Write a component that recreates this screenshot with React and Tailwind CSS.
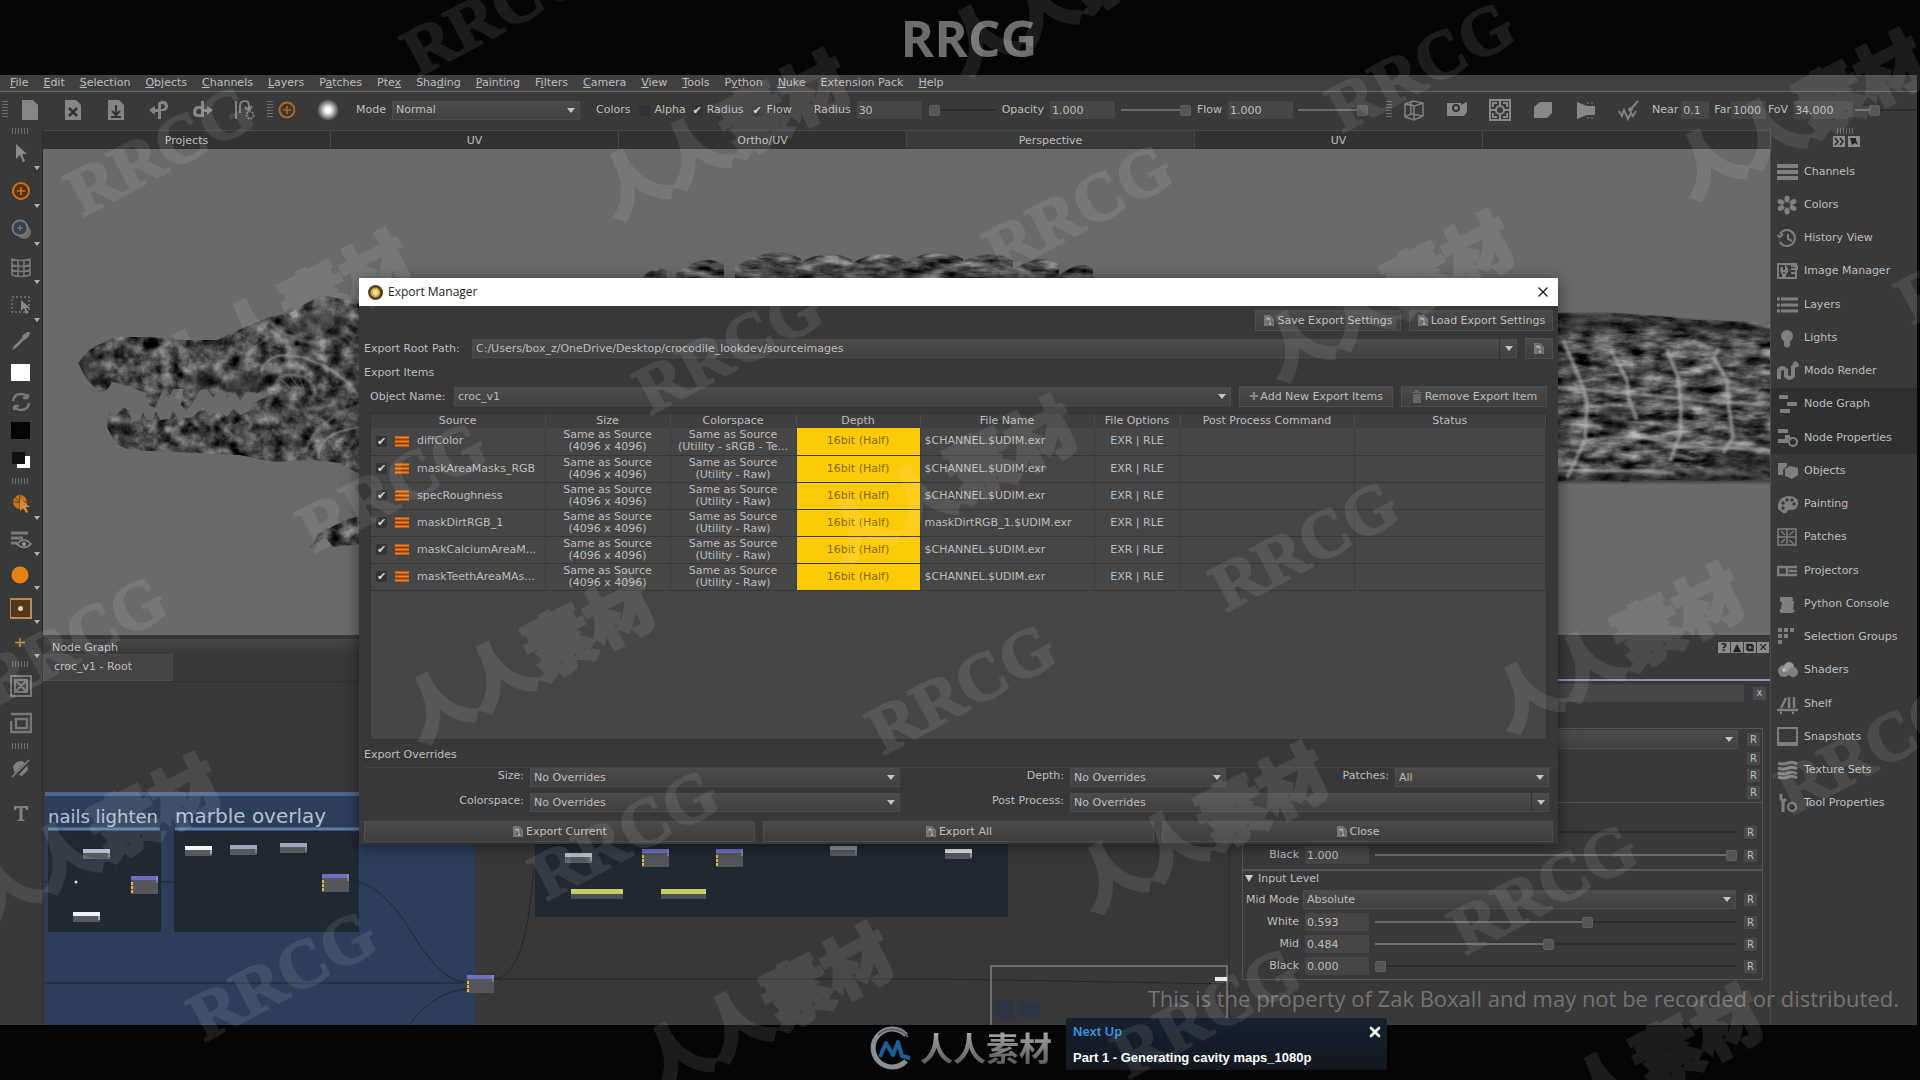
import { useState } from 'react';
import { X } from 'lucide-react';

const menus = [
    ['', 'F', 'ile'], ['', 'E', 'dit'], ['', 'S', 'election'], ['', 'O', 'bjects'], ['', 'C', 'hannels'],
    ['', 'L', 'ayers'], ['P', 'a', 'tches'], ['Pte', 'x', ''], ['Sha', 'd', 'ing'], ['', 'P', 'ainting'],
    ['F', 'i', 'lters'], ['', 'C', 'amera'], ['', 'V', 'iew'], ['', 'T', 'ools'], ['P', 'y', 'thon'],
    ['', 'N', 'uke'], ['Extension Pack', '', ''], ['', 'H', 'elp'],
];

const exportRows = [
    { name: 'diffColor', space: '(Utility - sRGB - Te...', file: '$CHANNEL.$UDIM.exr' },
    { name: 'maskAreaMasks_RGB', space: '(Utility - Raw)', file: '$CHANNEL.$UDIM.exr' },
    { name: 'specRoughness', space: '(Utility - Raw)', file: '$CHANNEL.$UDIM.exr' },
    { name: 'maskDirtRGB_1', space: '(Utility - Raw)', file: 'maskDirtRGB_1.$UDIM.exr' },
    { name: 'maskCalciumAreaM...', space: '(Utility - Raw)', file: '$CHANNEL.$UDIM.exr' },
    { name: 'maskTeethAreaMAs...', space: '(Utility - Raw)', file: '$CHANNEL.$UDIM.exr' },
];

const latinMarks = [
    [496, 10], [1420, 66], [160, 150], [1078, 208], [728, 348], [392, 486], [1990, 258], [1304, 545],
    [72, 640], [961, 688], [624, 834], [282, 975], [1870, 748], [1543, 888], [1206, 1012],
];
const hanMarks = [
    [1070, -12], [722, 132], [284, 312], [1798, 112], [1386, 293], [949, 478], [527, 655], [93, 836],
    [1616, 645], [1200, 825], [765, 1005], [1635, 1066],
];

/* ---------- small shared pieces ---------- */

function Grip({ vertical }) {
    return (
        <svg width={vertical ? 6 : 18} height={vertical ? 18 : 6} fill="none" stroke="#6e6e6e" strokeWidth="6" strokeDasharray="1 2">
            <path d={vertical ? 'M3 0V18' : 'M0 3H18'} />
        </svg>
    );
}

function Combo({ id, value, className = '', split }) {
    return (
        <div className={`relative h-[19px] min-w-0 ${className}`}>
            <select
                id={id}
                aria-label={value}
                className="block h-full w-full appearance-none truncate border border-[#4c4c4c] bg-linear-to-b from-[#4b4b4b] to-[#404040] pr-5 pl-[3px] text-[11px] leading-4 outline-none"
            >
                <option>{value}</option>
            </select>
            <span className={`pointer-events-none absolute inset-y-0 right-0 flex w-[18px] items-center justify-center ${split ? 'border-l border-[#333]' : ''}`}>
                <svg width="8" height="5"><path d="M0 0H8L4 5Z" fill="#c4c4c4" /></svg>
            </span>
        </div>
    );
}

function Slider({ value, label, className = '' }) {
    const fill = { background: `linear-gradient(to right, #6a6a6a ${value}%, #2b2b2b ${value}%) center / 100% 2px no-repeat` };
    return (
        <input
            type="range"
            aria-label={label}
            defaultValue={value}
            style={fill}
            className={`h-3 min-w-0 appearance-none [&::-webkit-slider-thumb]:size-[11px] [&::-webkit-slider-thumb]:appearance-none [&::-webkit-slider-thumb]:rounded-[2px] [&::-webkit-slider-thumb]:border [&::-webkit-slider-thumb]:border-[#606060] [&::-webkit-slider-thumb]:bg-[#555] ${className}`}
        />
    );
}

function Tick({ id, on, label }) {
    const [checked, setChecked] = useState(on);
    return (
        <input
            id={id}
            type="checkbox"
            aria-label={label}
            checked={checked}
            onChange={() => setChecked(!checked)}
            className="grid size-[11px] shrink-0 appearance-none place-items-center rounded-[2px] bg-[#333] text-[11px] leading-[11px] text-[#d6d6d6] checked:after:content-['✔']"
        />
    );
}

function Num({ id, value, label, className = '' }) {
    return <input id={id} aria-label={label} defaultValue={value} className={`h-[18px] bg-[#464646] pl-[2px] text-[11px] outline-none ${className}`} />;
}

function PageIcon({ className = '' }) {
    return (
        <svg width="12" height="13" viewBox="0 0 12 13" className={className}>
            <path d="M1 1h6l4 4v7H1z" fill="#777" />
            <path d="M2 5c1-3 5-3 6 0v4h2l-3 3-3-3h2V6" fill="#aaa" stroke="#444" strokeWidth=".6" />
        </svg>
    );
}

function PushButton({ children, className = '' }) {
    return (
        <button className={`flex h-[21px] items-center justify-center gap-[2px] border border-[#4e4e4e] bg-linear-to-b from-[#4a4a4a] to-[#3d3d3d] text-[11px] leading-4 whitespace-nowrap ${className}`}>
            {children}
        </button>
    );
}

/* ---------- top bars ---------- */

function MenuBar() {
    return (
        <nav className="flex h-[17px] items-center gap-[15px] border-b border-[#686868] bg-[#404040] px-[10px] leading-4">
            {menus.map(([a, b, c]) => (
                <button key={a + b + c} className="whitespace-nowrap">{a}<u className="underline-offset-1">{b}</u>{c}</button>
            ))}
        </nav>
    );
}

const fileIcons = [
    ['New', <path key="p" d="M3 1h11l5 5v15H3z" />],
    ['Close', <g key="p"><path d="M3 1h11l5 5v15H3z" /><path d="M7 9l8 8M15 9l-8 8" stroke="#333" strokeWidth="2.5" /></g>],
    ['Save', <g key="p"><path d="M3 1h11l5 5v15H3z" /><path d="M11 6v9M7 12l4 4 4-4M6 18h10" stroke="#333" strokeWidth="2" fill="none" /></g>],
    ['Undo', <path key="p" d="M1 11l6-4v3h3V6q0-4 5-4t5 5-5 5h-2v8h-3v-7H7v3zM13 5v5h2q2-1 2-3t-4-2z" fillRule="evenodd" />],
    ['Redo', <path key="p" d="M22 11l-6-4v3h-3V2h-3v5H6q-4 1-4 6t4 5h7v-5h3v3zM10 10v5H7q-2-1-2-2t2-3z" fillRule="evenodd" />],
    ['History', <g key="p" fill="none" stroke="#808080" strokeWidth="2"><path d="M2 20V2M6 14V7q0-5 5-5 4 0 4 5v3M11 8l4 4 3-5" /><circle cx="16" cy="16" r="3.500" strokeDasharray="2 1" /></g>],
];

const viewIcons = [
    ['Wireframe', <g key="v" fill="none" stroke="#808080" strokeWidth="1.5"><path d="M2 5l8-3 10 2v13l-9 4-9-3zM2 5l10 2 8-3M11 7v14M8 3v12l-6 3M8 15l12 2" /></g>],
    ['Camera', <g key="v"><path d="M1 4h14v2l6-3v10l-3 4H1z" /><circle cx="10" cy="9" r="4" fill="#333" /><circle cx="10" cy="9" r="2" /></g>],
    ['Focus', <g key="v" fill="none" stroke="#888" strokeWidth="2"><path d="M1 1h20v20H1z" /><circle cx="11" cy="11" r="4" /><path d="M4 8V4h4M14 4h4v4M18 14v4h-4M8 18H4v-4M11 2v5M11 15v5M2 11h5M15 11h5" /></g>],
    ['Shaded', <path key="v" d="M2 8l6-5h12v11l-5 5H2z" />],
    ['Projector', <g key="v"><path d="M2 3l10 4h8v9h-8L2 20z" /><path d="M12 4h8M12 19h8" stroke="#888" strokeDasharray="2 2" /></g>],
    ['Paint', <g key="v" fill="none" stroke="#808080" strokeWidth="2"><path d="M1 12l3 5 2-6 4 9 3-6 2 3 3-5" /><path d="M14 9l6-7" /><path d="M11 12l3-3" strokeWidth="4" /></g>],
];

function Target() {
    return (
        <svg width="18" height="18" stroke="#b8651c" fill="none">
            <circle cx="9" cy="9" r="7.5" strokeWidth="2" />
            <path d="M9 5v8M5 9h8" strokeWidth="1.6" />
        </svg>
    );
}

function ToolBar() {
    return (
        <div className="flex h-9 items-center pl-[2px] leading-4">
            <Grip vertical />
            <div className="ml-[11px] flex gap-[21px]">
                {fileIcons.map(([name, art]) => (
                    <button key={name} aria-label={name}><svg width="22" height="22" fill="#858585">{art}</svg></button>
                ))}
            </div>
            <span className="ml-[11px]"><Grip vertical /></span>
            <button aria-label="Paint tool" className="ml-[5px]"><Target /></button>
            <span className="ml-[20px] size-6 rounded-full bg-radial from-white from-15% to-transparent to-65%" />
            <label htmlFor="mode" className="ml-[16px]">Mode</label>
            <Combo id="mode" value="Normal" className="ml-[6px] w-[188px]" />
            <span className="ml-[16px]">Colors</span>
            <span className="ml-[9px] flex items-center gap-[4px]"><Tick id="alpha" on={false} /><label htmlFor="alpha">Alpha</label></span>
            <span className="ml-[6px] flex items-center gap-[4px]"><Tick id="rad" on /><label htmlFor="rad">Radius</label></span>
            <span className="ml-[8px] flex items-center gap-[4px]"><Tick id="flo" on /><label htmlFor="flo">Flow</label></span>
            <label htmlFor="radius" className="ml-[22px]">Radius</label>
            <Num id="radius" value="30" className="ml-[6px] w-[65px]" />
            <Slider value={0} label="Radius amount" className="ml-[7px] w-[66px]" />
            <label htmlFor="opacity" className="ml-[7px]">Opacity</label>
            <Num id="opacity" value="1.000" className="ml-[6px] w-[65px]" />
            <Slider value={100} label="Opacity amount" className="ml-[6px] w-[70px]" />
            <label htmlFor="flow" className="ml-[6px]">Flow</label>
            <Num id="flow" value="1.000" className="ml-[6px] w-[65px]" />
            <Slider value={100} label="Flow amount" className="ml-[5px] w-[70px]" />
            <span className="ml-[18px]"><Grip vertical /></span>
            <div className="ml-[11px] flex gap-[21px]">
                {viewIcons.map(([name, art]) => (
                    <button key={name} aria-label={name}><svg width="22" height="22" fill="#888">{art}</svg></button>
                ))}
            </div>
            <label htmlFor="near" className="ml-[12px]">Near</label>
            <Num id="near" value="0.1" className="ml-[3px] w-[28px]" />
            <label htmlFor="far" className="ml-[5px]">Far</label>
            <Num id="far" value="1000" className="w-[35px]" />
            <label htmlFor="fov" className="ml-[2px]">FoV</label>
            <Num id="fov" value="34.000" className="ml-[5px] w-[60px]" />
            <Slider value={28} label="Field of view" className="ml-[2px] flex-1" />
        </div>
    );
}

/* ---------- left tool column ---------- */

const S = { fill: 'none', stroke: '#787878', strokeWidth: 2 };
const tools = [
    ['h-[6px]', null],
    ['h-[38px]', 'Select', <path key="t" d="M6 2v15l4-4 3 7 2-1-3-7h5z" fill="#8a8a8a" />, true],
    ['h-[38px]', 'Paint', <g key="t" fill="#59310f" stroke="#c87422"><circle cx="11" cy="11" r="8" strokeWidth="2" /><path d="M11 7v8M7 11h8" strokeWidth="1.6" /></g>, true],
    ['h-[38px]', 'Clone', <g key="t"><circle cx="14" cy="14" r="7" fill="#6b6b6b" /><circle cx="10" cy="10" r="7.5" fill="#3a3f47" stroke="#747c84" strokeWidth="1.8" /><path d="M10 7v6M7 10h6" stroke="#808890" /></g>, true],
    ['h-[38px]', 'Warp', <path key="t" d="M2 3q9 3 18 0v16q-9 3-18 0zM2 9q9 3 18 0M2 14q9 3 18 0M8 4v16M14 4v16" {...S} strokeWidth="1.6" />, true],
    ['h-[38px]', 'Marquee', <g key="t"><path d="M2 3h17v15H2z" {...S} strokeDasharray="2 2" strokeWidth="1.4" /><path d="M11 6v11l3-3 2 6 2-1-2-5h4z" fill="#8a8a8a" /></g>, true],
    ['h-[34px]', 'Pick color', <path key="t" d="M2 20l2-4L13 7l2 2-9 9zM12 6l5-4 3 0-1 4-4 4z" fill="#808080" />],
    ['h-[29px]', 'Foreground', <path key="t" d="M1 2h19v17H1z" fill="#fff" />],
    ['h-[29px]', 'Swap', <path key="t" d="M3 10q1-7 8-7 5 0 7 4V3M18 7h-5M19 12q-1 7-8 7-5 0-7-4v4M4 15h5" {...S} strokeWidth="2.4" />],
    ['h-[30px]', 'Background', <path key="t" d="M1 2h19v17H1z" fill="#050505" />],
    ['h-[30px]', 'Reset colors', <g key="t"><path d="M7 6h13v12H7z" fill="#fff" /><path d="M2 2h13v12H2z" fill="#111" /></g>],
    ['h-[10px]', null],
    ['h-[36px]', 'Mask', <g key="t"><circle cx="10" cy="9" r="7" fill="#c9741c" /><path d="M0 9h22M10 0v18M5 4l10 11" stroke="#6b3b0c" /><path d="M10 6v12l3-3 3 5 2-1-2-5h4z" fill="#d08a44" /></g>, true],
    ['h-[36px]', 'Layer view', <g key="t"><path d="M1 4h17M1 9h12M1 14h6" {...S} strokeWidth="3" /><path d="M7 15q7-8 14 0-7 7-14 0z" fill="#3a3a3a" stroke="#8a8a8a" strokeWidth="1.5" /><circle cx="14" cy="15" r="2.2" fill="#8a8a8a" /></g>, true],
    ['h-[34px]', 'Brush tip', <circle key="t" cx="10" cy="11" r="8.5" fill="#e8820e" />, true],
    ['h-[34px]', 'Buffer', <g key="t"><path d="M0 1h21v19H0z" fill="#54371c" stroke="#b98b5c" strokeWidth="2" /><circle cx="10.500" cy="10.500" r="2.500" fill="#eacfae" /></g>, true],
    ['h-[34px]', 'Add', <path key="t" d="M10 6v9M5 10.500h10" stroke="#c08a3c" strokeWidth="1.5" />, true],
    ['h-[8px]', null],
    ['h-[36px]', 'Fit', <path key="t" d="M1 1h20v20H1zM5 5h12v12H5zM5 5l12 12M17 5L5 17" {...S} />],
    ['h-[38px]', 'Frame', <path key="t" d="M1 2h20v18H1V9M6 7h11v9H6z" {...S} strokeWidth="2.5" />],
    ['h-[8px]', null],
    ['h-[38px]', 'No light', <g key="t"><path d="M3 9q2-6 9-6l5 3 1 6-6 6-7-2z" fill="#808080" /><path d="M3 20L19 3" stroke="#3a3a3a" strokeWidth="4" /><path d="M2 19L19 2" stroke="#808080" strokeWidth="1.6" /></g>],
    ['h-[50px]', 'Text', <path key="t" d="M4 4h14v4h-1.500L15 6h-2.500v11l2 1v1h-7v-1l2-1V6H7L5.500 8H4z" fill="#808080" />],
];

function ToolColumn() {
    return (
        <div className="flex w-[43px] shrink-0 flex-col border-r border-[#2c2c2c]">
            {tools.map(([h, name, art, more], i) => name ? (
                <button key={name} aria-label={name} className={`relative flex shrink-0 items-center justify-center ${h}`}>
                    <svg width="22" height="22">{art}</svg>
                    {more && <svg width="6" height="4" className="absolute right-0.5 bottom-0.5"><path d="M0 0h6L3 4z" fill="#b0b0b0" /></svg>}
                </button>
            ) : (
                <span key={i} className={`flex shrink-0 items-center justify-center ${h}`}><Grip /></span>
            ))}
        </div>
    );
}

/* ---------- palette list on the right ---------- */

const palettes = [
    ['Channels', <path key="i" d="M0 4h21M0 10h21M0 16h21" strokeWidth="4" />],
    ['Colors', <g key="i" stroke="none"><ellipse cx="10" cy="4" rx="2.600" ry="3.500" /><ellipse cx="10" cy="16" rx="2.600" ry="3.500" /><ellipse cx="4" cy="7" rx="3.600" ry="2.600" transform="rotate(25 4 7)" /><ellipse cx="16" cy="7" rx="3.600" ry="2.600" transform="rotate(-25 16 7)" /><ellipse cx="4" cy="13" rx="3.600" ry="2.600" transform="rotate(-25 4 13)" /><ellipse cx="16" cy="13" rx="3.600" ry="2.600" transform="rotate(25 16 13)" /></g>],
    ['History View', <path key="i" d="M3 6a8 8 0 1 1 0 8M0 7l3 2 3-3M11 6v5l4 2" strokeWidth="2" fill="none" />],
    ['Image Manager', <g key="i" fill="none" strokeWidth="2"><path d="M1 3h18v14H1z" /><path d="M6 17v-4q-3-3-1-7v4h4V6q3 4-1 7v4M14 5h6v3h-6M14 12h6" /></g>],
    ['Layers', <path key="i" d="M0 4h3m1 0h17M0 10h3m1 0h17M0 16h3m1 0h17" strokeWidth="3" />],
    ['Lights', <g key="i" stroke="none"><circle cx="10" cy="8" r="6" /><path d="M7 13h6v5l-3 2-3-2z" /></g>],
    ['Modo Render', <path key="i" d="M2 18V9q4-4 7 0v6q4 4 7 0V5M15 6l5-2-3-3" strokeWidth="4" fill="none" />],
    ['Node Graph', <path key="i" d="M2 3h9M10 10h10M3 17h10" strokeWidth="4" />],
    ['Node Properties', <g key="i"><path d="M1 3h10M1 13h10M8 9h5" strokeWidth="4" /><circle cx="16" cy="14" r="4" fill="none" strokeWidth="2" /></g>],
    ['Objects', <path key="i" d="M1 2h9v3l-4 4v5H1zM8 8l5-3 8 2v7l-6 4-7-3z" stroke="none" />],
    ['Painting', <g key="i" stroke="none"><path d="M1 15Q0 3 11 2q11 0 10 8-1 6-6 6-4-1-5 2-2 2-4 1z" /><g fill="#393939"><circle cx="6" cy="9" r="1.700" /><circle cx="10" cy="6" r="1.700" /><circle cx="15" cy="6" r="1.700" /><circle cx="17" cy="10" r="1.700" /><circle cx="6" cy="14" r="1.700" /></g></g>],
    ['Patches', <path key="i" d="M1 2h18v16H1zM10 2v16M1 10h18M4 4l4 4M12 8l5-4M4 16l4-4M12 13l5 4" strokeWidth="1.5" fill="none" />],
    ['Projectors', <path key="i" d="M1 6h9v8H1zM12 6h8M12 10h8M12 14h8M10 6h3M10 14h3" strokeWidth="2.500" fill="none" />],
    ['Python Console', <path key="i" d="M3 3h12q2 2 0 4h2l-1 9h2q0 2-3 3H5q-3 0-2-4h1l1-7H3z" stroke="none" />],
    ['Selection Groups', <path key="i" d="M1 3h16M1 9h10M1 15h4" strokeWidth="4" strokeDasharray="4 2" />],
    ['Shaders', <g key="i" stroke="none"><circle cx="7" cy="11" r="6" /><circle cx="12" cy="7" r="5" fill="#9c9c9c" /><circle cx="16" cy="12" r="5" /><circle cx="7" cy="10" r="2" fill="#bbb" /></g>],
    ['Shelf', <path key="i" d="M0 16h21M4 14l5-10M12 14V3M17 14V3M3 19h2M15 19h2" strokeWidth="2.500" fill="none" />],
    ['Snapshots', <path key="i" d="M1 1h19v17H1zM1 16h19" strokeWidth="2" fill="none" />],
    ['Texture Sets', <path key="i" d="M1 3q5 2 10 0t9 1M1 8q5 2 10 0t9 1M1 13q5 2 10 0t9 1M1 17q5 2 10 0t9 1" strokeWidth="3" fill="none" />],
    ['Tool Properties', <g key="i"><path d="M4 1v5l3 2 2-2M6 7v12" strokeWidth="3" fill="none" /><circle cx="15" cy="14" r="4" fill="none" strokeWidth="2" /><path d="M15 8v2" /></g>],
];

function PaletteList() {
    return (
        <aside className="flex w-[147px] shrink-0 flex-col border-l border-[#4c4c4c]">
            <div className="flex h-[27px] flex-col items-center gap-[2px] pl-[4px]">
                <Grip />
                <div className="flex gap-[3px]">
                    <button aria-label="Expand"><svg width="12" height="11"><path d="M0 0h12v11H0z" fill="#8c8c8c" /><path d="M2 2l3 3.500L2 9M7 2l3 3.500L7 9" fill="none" stroke="#222" strokeWidth="1.500" /></svg></button>
                    <button aria-label="Pin"><svg width="12" height="11"><path d="M0 0h12v11H0z" fill="#8c8c8c" /><path d="M2 2h6v2l2 5-3-2-3 2z" fill="#222" /></svg></button>
                </div>
            </div>
            <ul className="flex h-[665px] flex-col">
                {palettes.map(([name, art]) => (
                    <li key={name} className={`flex-1 ${name.startsWith('Node') ? 'bg-[#303030]' : ''}`}>
                        <button className="flex h-full w-full items-center gap-[5px] pl-[6px] leading-4 whitespace-nowrap">
                            <svg width="22" height="20" fill="#7f7f7f" stroke="#7f7f7f" className="shrink-0">{art}</svg>
                            {name}
                        </button>
                    </li>
                ))}
            </ul>
        </aside>
    );
}

/* ---------- 3d viewport ---------- */

const plates = [
    [604, 22], [641, 42], [700, 60], [755, 56], [808, 56], [862, 60], [916, 56], [974, 44], [1022, 30],
];

function Viewport() {
    return (
        <svg className="block h-[486px] w-full bg-[#686b69]" aria-label="Crocodile model">
            <defs>
                <filter id="skin" x="0" y="0" width="100%" height="100%" colorInterpolationFilters="sRGB">
                    <feTurbulence type="fractalNoise" baseFrequency=".07 .08" numOctaves="5" seed="7" />
                    <feColorMatrix values=".7 .6 0 0 -.36  .7 .6 0 0 -.36  .7 .6 0 0 -.36  0 0 0 0 1" />
                    <feComposite in2="SourceAlpha" operator="in" result="n" />
                    <feGaussianBlur in="n" stdDeviation=".4" />
                </filter>
                <filter id="hide" x="0" y="0" width="100%" height="100%" colorInterpolationFilters="sRGB">
                    <feTurbulence type="fractalNoise" baseFrequency=".04 .11" numOctaves="5" seed="3" />
                    <feColorMatrix values=".8 .6 0 0 -.39  .8 .6 0 0 -.39  .8 .6 0 0 -.39  0 0 0 0 1" />
                    <feComposite in2="SourceAlpha" operator="in" result="n" />
                    <feGaussianBlur in="n" stdDeviation=".4" />
                </filter>
                <filter id="soft"><feGaussianBlur stdDeviation="1.2" /></filter>
            </defs>
            <g filter="url(#skin)">
                <path d="M35 214Q46 198 60 194 68 189 77 188L107 188 144 191 174 191 200 179 227 168 250 163Q270 148 284 147L318 154V326L297 314 270 311 230 313 197 306 130 303 87 301Q72 296 69 288L64 278 66 262 72 268 80 258 86 262 89 273 97 271 100 264 104 271 110 272 113 262 117 271 127 270 130 261 135 270 150 268 160 258 166 267 176 262 184 268 190 260 197 266 206 262 210 254 227 246 222 240 214 244 204 242 197 252 192 242 183 250 178 241 170 248 164 240 157 241 147 258 143 262 138 256 140 240 130 240 126 250 120 241 112 259 106 256 100 243 86 237 69 233 65 240 57 244 47 234 40 224Z" />
                <path d="M267 399L275 385 300 372 318 366V395L290 398 282 388Z" />
            </g>
            <g fill="#161a19" opacity=".4" filter="url(#soft)">
                <path d="M236 176q18-12 50-12l20 6-12 18q-28 2-58-12zM150 222q14-6 30 6l-8 12-20-4zM184 232q16-8 44-4l-4 14-36 2zM36 214l14-12 12 18 4 14-14 2zM70 276l20 0 4 20-16 0z" />
            </g>
            <g fill="none" stroke="#a4a4a4" strokeOpacity=".5" filter="url(#soft)">
                <path d="M218 222q10-24 46-12t54 40M236 240q-6-14 14-14t22 20M226 188q-30 18-20 34M228 174q26 24 56 18M262 302q16-36 56-46M276 310q-4-26 42-32" strokeWidth="2.500" />
            </g>
            <g fill="none" stroke="#9a9a9a" strokeOpacity=".5">
                <path d="M218 222q10-24 46-12t54 40M238 230l8 8m2-10l6 8m3-6l4 10M276 310q-4-26 42-32" />
            </g>
            <g filter="url(#hide)">
                {plates.map(([x, w]) => (
                    <path key={x} d={`M${x - 8} 140V${118 + (60 - w) / 3}Q${x + w / 2} ${94 + (60 - w) / 2} ${x + w - 2} ${110 + (60 - w) / 3}V140Z`} />
                ))}
                <path d="M1490 166L1526 164 1544 167 1570 164 1616 167 1650 171 1690 172 1728 174V331L1680 332 1620 331 1580 333 1540 331 1490 333Z" />
            </g>
            <g fill="#101010" opacity=".4" filter="url(#soft)">
                <path d="M1510 164h60l50 4 50 4 58 4v14l-60-2-50-8-60 2-48 2zM1510 320l60 4 160-6v16h-220zM1660 310l40-8 30 6v20h-70zM1556 262q20-12 24 8t-20 16z" />
            </g>
            <g fill="none" stroke="#b4b4b4" strokeOpacity=".6" filter="url(#soft)">
                <path d="M1520 191l20 47 4 16-2 37-18 38M1568 201l16 30 2 20 8 20M1624 201l11 27 3 30-1 28-10 26M1676 200l-6 8 14 23 2 28 4 29-10 16" strokeWidth="4" />
                <path d="M1512 238l28 2 60 6 60 6 68 4M1634 297l94 4M1512 322q60-2 120 2M1544 291l50-4 40 8" strokeWidth="3" />
            </g>
        </svg>
    );
}

/* ---------- node graph ---------- */

const small = [
    [40, 167, '#b5bccb'], [30, 230, '#f0f2fa'], [142, 164, '#f3f5f5'], [187, 163, '#9fa8b8'], [237, 161, '#9fa8b8'],
    [522, 171, '#b5bccb'], [787, 164, '#8d9299'], [902, 167, '#dfe2e6'],
];
const merges = [[88, 194], [279, 192], [599, 167], [673, 167], [424, 293]];

function NodeGraph() {
    return (
        <svg className="block min-h-0 w-full flex-1 bg-[#383838]" fontFamily="DejaVu Sans, sans-serif" fill="#b4c1d6">
            <rect x="2" y="110" width="430" height="240" fill="#2c3e5a" />
            <rect x="2" y="110" width="314" height="4" fill="#4c6790" />
            <rect x="5" y="148" width="113" height="102" fill="#202834" />
            <rect x="131" y="148" width="185" height="102" fill="#202834" />
            <path d="M5 147h112M132 147h184" stroke="#5d7ba8" strokeWidth="3" />
            <text x="5" y="141" fontSize="18">nails lighten</text>
            <text x="132" y="141" fontSize="20">marble overlay</text>
            <rect x="492" y="120" width="473" height="115" fill="#202834" />
            <g fill="none" stroke="#20252d">
                <path d="M2 200H88M116 200H279M307 199q30 0 62 52t54 48M2 301H424M451 297H900L1184 302M366 343q26-34 58-36M451 297q24-2 34-60l6-50M30 200V170M76 200V170M70 232q10-28 18-28M262 192V170M572 220V178" />
            </g>
            <circle cx="33" cy="200" r="1.500" fill="#ddd" />
            {small.map(([x, y, c]) => (
                <g key={`${x}-${y}`}>
                    <rect x={x} y={y} width="27" height="10" fill="#555a60" />
                    <rect x={x} y={y} width="27" height="4" fill={c} />
                    <path d={`M${x + 26} ${y}v8`} stroke={c} />
                </g>
            ))}
            {merges.map(([x, y]) => (
                <g key={x}>
                    <rect x={x} y={y} width="27" height="18" fill="#55565a" />
                    <rect x={x} y={y} width="27" height="4" fill="#6f6fc0" />
                    <path d={`M${x + 26} ${y}v7`} stroke="#a0a0dd" />
                    <path d={`M${x + 1} ${y + 6}v12`} stroke="#e8b53c" strokeWidth="2" strokeDasharray="3 1" />
                </g>
            ))}
            <g fill="#4c5055"><rect x="528" y="207" width="52" height="10" /><rect x="618" y="207" width="45" height="10" /></g>
            <g fill="#c8ce62"><rect x="528" y="207" width="52" height="5" /><rect x="618" y="207" width="45" height="5" /></g>
            <rect x="948" y="284" width="236" height="70" fill="none" stroke="#7d7d7d" strokeWidth="1.500" />
            <path d="M953 318h18v20h-18zM976 320h22v16h-22z" fill="#26364f" opacity=".6" />
            <rect x="1172" y="295" width="12" height="4" fill="#e8e8e8" />
        </svg>
    );
}

/* ---------- node properties ---------- */

function ResetButton() {
    return <button className="size-[13px] shrink-0 bg-[#4a4a4a] text-center text-[10px] leading-[13px]">R</button>;
}

function PropRow({ name, value, amount, id }) {
    return (
        <div className="flex h-[18px] items-center gap-[6px]">
            <label htmlFor={id} className="w-[56px] text-right">{name}</label>
            <Num id={id} value={value} className="w-[64px]" />
            <Slider value={amount} label={`${name} amount`} className="flex-1" />
            <span className="flex w-[14px] justify-end"><ResetButton /></span>
        </div>
    );
}

function NodeProperties() {
    return (
        <section className="flex w-[541px] shrink-0 flex-col border-l border-[#2e2e2e] leading-4">
            <div className="flex h-[14px] items-center justify-end gap-px pt-[2px] pr-[1px] text-[#222]">
                {['?', '▲', '⧉', '✕'].map((g) => (
                    <button key={g} className="h-[11px] w-3 bg-[#8c8c8c] text-center text-[11px] leading-[11px] font-bold">{g}</button>
                ))}
            </div>
            <div className="mt-[26px] border-t-2 border-[#8e95a8]" />
            <div className="flex items-center gap-[9px] px-[12px] pt-[3px] pr-[4px]">
                <input aria-label="Node name" className="h-[18px] min-w-0 flex-1 bg-[#464646]" />
                <button aria-label="Close node" className="size-[13px] bg-[#4a4a4a] text-center text-[10px] leading-[12px]">x</button>
            </div>
            <div className="mt-[26px] mr-[7px] ml-[12px] flex flex-col border border-[#555] leading-4">
                <div className="flex items-center gap-[9px] pt-px pr-[2px]">
                    <Combo value="Default" className="flex-1" />
                    <ResetButton />
                </div>
                <div className="flex flex-col items-end gap-1 pt-[3px] pr-[2px] pb-[3px]">
                    <ResetButton /><ResetButton /><ResetButton />
                </div>
                <div className="border-t border-[#555] pt-[20px] pr-[5px]">
                    <PropRow id="oWhite" name="White" value="1.000" amount={0} />
                    <div className="h-[5px]" />
                    <PropRow id="oBlack" name="Black" value="1.000" amount={100} />
                </div>
                <div className="mt-[5px] flex flex-col gap-[4px] border-t-2 border-[#555] pr-[5px] pb-[4px]">
                    <button className="flex h-[15px] items-center gap-[5px] pl-[2px]">
                        <svg width="8" height="7"><path d="M0 0h8L4 7z" fill="#ccc" /></svg>Input Level
                    </button>
                    <div className="flex items-center">
                        <label htmlFor="mid" className="w-[56px] text-right whitespace-nowrap">Mid Mode</label>
                        <Combo id="mid" value="Absolute" className="mr-[8px] ml-[4px] flex-1" />
                        <ResetButton />
                    </div>
                    <PropRow id="iWhite" name="White" value="0.593" amount={59} />
                    <PropRow id="iMid" name="Mid" value="0.484" amount={48} />
                    <PropRow id="iBlack" name="Black" value="0.000" amount={0} />
                </div>
            </div>
        </section>
    );
}

/* ---------- export dialog ---------- */

function ExportTable() {
    return (
        <div className="h-[327px] border border-[#333] bg-[#464646]">
            <table className="w-full table-fixed border-collapse text-center leading-[12px]">
                <colgroup>
                    <col className="w-[174px]" /><col className="w-[125px]" /><col className="w-[126px]" /><col className="w-[124px]" />
                    <col className="w-[174px]" /><col className="w-[86px]" /><col className="w-[174px]" /><col />
                </colgroup>
                <thead>
                    <tr className="h-[14px] bg-[#3e3e3e]">
                        {['Source', 'Size', 'Colorspace', 'Depth', 'File Name', 'File Options', 'Post Process Command', 'Status'].map((h) => (
                            <th key={h} className="border-r border-[#4a4a4a] p-0 font-normal whitespace-nowrap">{h}</th>
                        ))}
                    </tr>
                </thead>
                <tbody>
                    {exportRows.map((row) => (
                        <tr key={row.name} className="h-[27px] border-b border-[#363636] *:border-r *:border-[#3c3c3c] *:p-0">
                            <td>
                                <div className="flex items-center pl-[5px]">
                                    <Tick on label={row.name} />
                                    <svg width="14" height="11" className="ml-[8px] shrink-0"><path d="M0 0h14v11H0z" fill="#8f3d08" /><path d="M0 1.500h14M0 5.500h14M0 9.500h14" stroke="#ee7f22" strokeWidth="2" /></svg>
                                    <span className="ml-[8px] whitespace-nowrap">{row.name}</span>
                                </div>
                            </td>
                            <td>Same as Source<br />(4096 x 4096)</td>
                            <td className="whitespace-nowrap">Same as Source<br />{row.space}</td>
                            <td className="bg-[#fdca08] text-[#86690f]">16bit (Half)</td>
                            <td className="text-left"><span className="pl-1">{row.file}</span></td>
                            <td>EXR | RLE</td>
                            <td />
                            <td />
                        </tr>
                    ))}
                </tbody>
            </table>
        </div>
    );
}

function ExportDialog() {
    return (
        <div role="dialog" aria-label="Export Manager" className="absolute top-[278px] right-[362px] left-[359px] bg-[#383838] shadow-[0_2px_14px_rgba(0,0,0,0.5)]">
            <div className="flex h-[28px] items-center bg-white pr-[7px] pl-[9px] font-['Open_Sans',sans-serif] text-[12px] text-[#222]">
                <svg width="15" height="15"><circle cx="7.500" cy="7.500" r="7.500" fill="#3d3210" /><circle cx="7.500" cy="7.500" r="5" fill="#c9a132" /><path d="M5 5l4-1 2 4-3 3-3-2z" fill="#ecd98c" /></svg>
                <h1 className="ml-[5px]">Export Manager</h1>
                <button aria-label="Close window" className="ml-auto"><X size={16} strokeWidth={2} /></button>
            </div>
            <div className="flex flex-col px-[5px] pt-[4px] pb-[2px] leading-4">
                <div className="flex justify-end gap-[8px]">
                    <PushButton className="w-[146px]"><PageIcon />Save Export Settings</PushButton>
                    <PushButton className="w-[144px]"><PageIcon />Load Export Settings</PushButton>
                </div>
                <div className="mt-[7px] flex h-[21px] items-center">
                    <label htmlFor="root" className="w-[108px] whitespace-nowrap">Export Root Path:</label>
                    <Combo id="root" split value="C:/Users/box_z/OneDrive/Desktop/crocodile_lookdev/sourceimages" className="flex-1" />
                    <PushButton className="ml-[8px] w-[28px]"><PageIcon /></PushButton>
                </div>
                <h2 className="mt-[6px] mb-[5px]">Export Items</h2>
                <div className="px-[6px]">
                    <div className="flex items-center">
                        <label htmlFor="object" className="w-[84px] whitespace-nowrap">Object Name:</label>
                        <Combo id="object" value="croc_v1" className="flex-1" />
                        <PushButton className="ml-[8px] w-[154px]"><b className="text-[#888]">✚</b>Add New Export Items</PushButton>
                        <PushButton className="ml-[8px] w-[146px]"><svg width="12" height="13"><path d="M1 2h10v1H1zM2 4h8v9H2zM4 0h4v2H4z" fill="#666" /></svg>Remove Export Item</PushButton>
                    </div>
                    <div className="mt-[6px]"><ExportTable /></div>
                </div>
                <h2 className="mt-[7px]">Export Overrides</h2>
                <div className="mt-[4px] grid grid-cols-[160px_370px_158px_156px_157px_1fr] gap-x-[6px] gap-y-[6px] border-t border-[#424242] pr-[4px]">
                    <label htmlFor="size" className="text-right">Size:</label>
                    <Combo id="size" value="No Overrides" />
                    <label htmlFor="depth" className="text-right">Depth:</label>
                    <Combo id="depth" value="No Overrides" />
                    <label htmlFor="patches" className="text-right">Patches:</label>
                    <Combo id="patches" value="All" />
                    <label htmlFor="space" className="text-right">Colorspace:</label>
                    <Combo id="space" value="No Overrides" />
                    <label htmlFor="post" className="text-right">Post Process:</label>
                    <Combo id="post" split value="No Overrides" className="col-span-3" />
                </div>
                <div className="mt-[9px] grid grid-cols-3 gap-[8px]">
                    <PushButton><PageIcon />Export Current</PushButton>
                    <PushButton><PageIcon />Export All</PushButton>
                    <PushButton><PageIcon />Close</PushButton>
                </div>
            </div>
        </div>
    );
}

/* ---------- video overlay ---------- */

function Watermarks() {
    return (
        <div aria-hidden="true" className="pointer-events-none absolute inset-0 overflow-hidden text-white opacity-9">
            {latinMarks.map(([left, top]) => (
                <span key={`${left}-${top}`} style={{ left, top }} className="absolute -translate-1/2 -rotate-[28deg] font-['Liberation_Serif',serif] text-[68px] leading-none font-bold [-webkit-text-stroke:2px_white]">RRCG</span>
            ))}
            {hanMarks.map(([left, top]) => (
                <span key={`${left}-${top}`} style={{ left, top }} className="absolute -translate-1/2 -rotate-[27deg] font-['Noto_Sans_CJK_SC',sans-serif] text-[68px] leading-none font-black whitespace-nowrap [-webkit-text-stroke:3px_white]">人人素材</span>
            ))}
        </div>
    );
}

function NextUp() {
    return (
        <div className="absolute right-[533px] bottom-[10px] flex h-[52px] w-[321px] flex-col justify-between rounded-[2px] bg-linear-to-b from-[#16202f] to-[#111821] pt-[6px] pr-[4px] pb-[4px] pl-[7px] font-['Liberation_Sans',Arial,sans-serif] text-[13px] leading-4 font-bold">
            <div className="flex items-center justify-between text-[#3c8fd2]">
                <span>Next Up</span>
                <button aria-label="Dismiss" className="text-white"><X size={16} strokeWidth={4} /></button>
            </div>
            <a href="#next" className="whitespace-nowrap text-white">Part 1 - Generating cavity maps_1080p</a>
        </div>
    );
}

export default function App() {
    return (
        <div className="relative flex h-screen flex-col overflow-hidden bg-[#050505] font-['DejaVu_Sans',Verdana,sans-serif] text-[11px] text-[#bebebe]">
            <header className="flex h-[75px] shrink-0 items-center justify-center pl-[18px] font-['Open_Sans',sans-serif] text-[51px] leading-none font-bold text-[#6c6e6d]">RRCG</header>

            <div className="mr-[3px] flex min-h-0 flex-1 flex-col bg-[#393939]">
                <MenuBar />
                <ToolBar />
                <div className="flex min-h-0 flex-1">
                    <ToolColumn />
                    <main className="flex min-w-0 flex-1 flex-col">
                        <div className="mt-[2px] flex h-[19px] shrink-0 border-t border-[#4a4a4a] bg-[#323232]">
                            {['Projects', 'UV', 'Ortho/UV', 'Perspective', 'UV'].map((t, i) => (
                                <button key={i} className={`w-[288px] border-r border-[#484848] pt-[2px] leading-4 ${t === 'Perspective' ? 'bg-[#3a3a3a]' : ''}`}>{t}</button>
                            ))}
                        </div>
                        <Viewport />
                        <div className="flex min-h-0 flex-1 pt-[4px]">
                            <section className="flex min-w-0 flex-1 flex-col">
                                <h2 className="h-[15px] bg-linear-to-b from-[#464646] to-[#393939] pl-[9px] leading-[17px]">Node Graph</h2>
                                <div className="border-b border-[#303030]">
                                    <button className="h-[27px] w-[130px] border border-[#4c4c4c] bg-[#444] pl-[10px] text-left">croc_v1 - Root</button>
                                </div>
                                <NodeGraph />
                            </section>
                            <NodeProperties />
                        </div>
                    </main>
                    <PaletteList />
                </div>
            </div>

            <footer className="flex h-[55px] shrink-0 items-center pl-[868px] pb-[10px] font-['Noto_Sans_CJK_SC',sans-serif] text-[33px] leading-none font-bold text-[#858585]">
                <svg width="46" height="46" fill="none" className="shrink-0">
                    <path d="M38 10A19 19 0 1 0 38 36" stroke="#8b8f92" strokeWidth="5" />
                    <path d="M40 12A20 20 0 0 0 10 10" stroke="#5c6064" strokeWidth="2" />
                    <path d="M12 32l6-14 7 12 5-13 4 14 8 2" stroke="#1b5e9a" strokeWidth="4" strokeLinejoin="round" />
                </svg>
                <span className="ml-[6px] bg-linear-to-b from-[#a8a8a8] to-[#5c5c5c] bg-clip-text text-transparent">人人素材</span>
            </footer>

            <ExportDialog />
            <p className="absolute right-[21px] bottom-[67px] font-['Open_Sans',sans-serif] text-[22px] leading-[30px] whitespace-nowrap text-[#737373]">
                This is the property of Zak Boxall and may not be recorded or distributed.
            </p>
            <NextUp />
            <Watermarks />
        </div>
    );
}
